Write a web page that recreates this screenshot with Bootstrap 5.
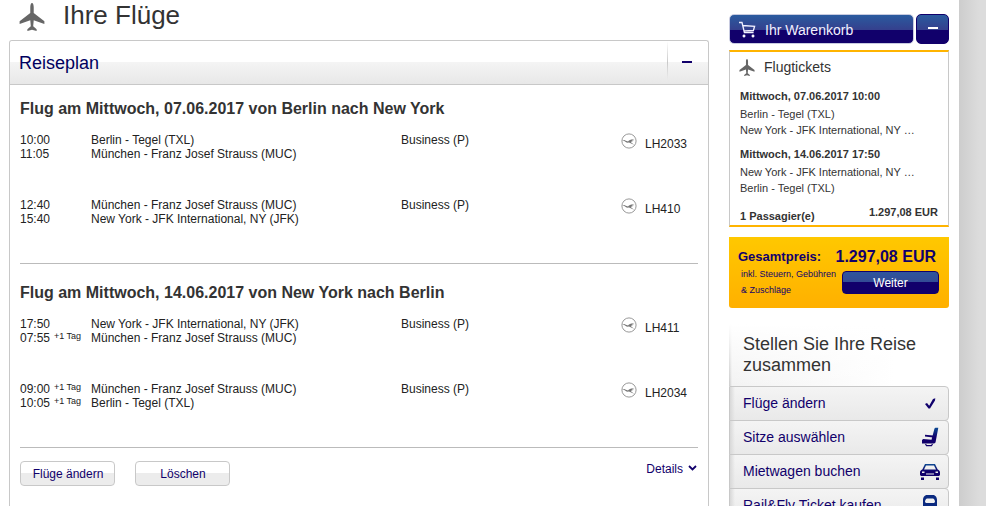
<!DOCTYPE html>
<html lang="de">
<head>
<meta charset="utf-8">
<meta name="viewport" content="width=device-width, initial-scale=1">
<title>Ihre Flüge</title>
<link href="https://cdn.jsdelivr.net/npm/bootstrap@5.3.0/dist/css/bootstrap.min.css" rel="stylesheet">
<style>
:root { --navy: #11006b; --line: #c8c8c8; --gold: #ffb400; --ink: #333; }
body { font-family: "Liberation Sans", Arial, sans-serif; font-size: 12px; line-height: 14px; color: var(--ink); background: #fff; }
a { color: var(--navy); text-decoration: none; }
h1, h2, h3 { margin: 0; color: var(--ink); }
.page-edge { flex: 0 0 27px; background: linear-gradient(90deg, #cdcdcd, #dcdcdc 75%); }
.sheet { padding: 0 10px 0 9px; gap: 20px; }
.page-title { height: 40px; padding: 0 10px; gap: 18px; }
.page-title h1 { font-size: 26px; font-weight: 400; line-height: 30px; }
.page-title svg { margin-top: 3px; }
.plan { border: 1px solid var(--line); border-bottom: 0; border-radius: 3px 3px 0 0; }
.plan-head { height: 44px; padding-left: 9px; border-bottom: 1px solid var(--line); border-radius: 3px 3px 0 0; background: linear-gradient(#fff 50%, #f4f4f4 50%, #e8e8e8); }
.plan-head h2 { font-size: 18px; font-weight: 400; color: #00005f; line-height: 22px; }
.plan-toggle { width: 41px; border: 0; padding: 0 2px 2px 0; background: linear-gradient(#fff0, #c8c8c8 50%, #fff0 90%) left / 1px 100% no-repeat; }
.dash { display: block; width: 10px; height: 2px; margin: 0 auto; background: var(--navy); }
.plan-body { padding: 14px 10px 0; }
.trip { border-bottom: 1px solid #bbb; }
.trip + .trip { padding-top: 19px; }
.trip h3 { font-size: 16px; font-weight: 700; line-height: 20px; margin-bottom: 14px; }
.flights { width: 100%; table-layout: fixed; color: #222; }
.flights td { height: 65px; padding: 0; vertical-align: top; }
.col-time { width: 71px; }
.col-class { width: 220px; }
.col-no { width: 77px; }
.clock { width: 34px; }
.plus-day { font-size: 9px; line-height: 11px; }
.flight-no { gap: 8px; }
.flight-no span { padding-top: 4px; }
.soft-btn { width: 95px; height: 25px; padding: 1px 0 0 1px; border: 1px solid var(--line); border-radius: 4px; font-size: 12px; line-height: 14px; color: var(--navy); background: linear-gradient(#fff 48%, #ececec 48%); }
.plan-foot { padding: 13px 0; }
.plan-foot .btn-pair { gap: 20px; }
.plan-foot a { padding-top: 1px; }
.side { flex: 0 0 220px; font-size: 11px; line-height: 16px; padding-top: 14px; }
.cart-head { gap: 2px; }
.cart-btn { height: 30px; border: 1px solid #c8cbe0; border-radius: 5px; padding: 2px 8px 0; gap: 9px; font-size: 14px; color: #f0f0ff; background: linear-gradient(#2a5b9f, #353f8d 54%, #11006b 54%); }
.cart-min { width: 33px; height: 30px; padding: 0; border: 1px solid var(--navy); border-radius: 5px; background: linear-gradient(#2a5b9f, #353f8d 54%, #11006b 54%); }
.cart-min .dash { background: #fff; margin-bottom: 3px; }
.cart-box { margin-top: 6px; padding: 7px 10px 0; border: solid var(--line); border-width: 0 1px; border-top: 2px solid var(--gold); border-bottom: 2px solid var(--gold); }
.cart-box h2 { font-size: 14px; font-weight: 400; line-height: 16px; }
.cart-kind { gap: 9px; margin: 0 0 12px -1px; }
.leg { margin-bottom: 8px; }
.leg strong { display: block; margin-bottom: 2px; }
.cart-sum { height: 21px; }
.cart-sum .pax { padding-top: 4px; }
.total { margin-top: 10px; padding: 10px 10px 10px 9px; border-radius: 0 0 3px 3px; color: var(--navy); background: linear-gradient(#ffc800, #ffb000); }
.total-row { line-height: 19px; font-size: 13px; padding-right: 3px; }
.total-row .sum { font-size: 16px; }
.fineprint { font-size: 9px; line-height: 16px; padding-left: 3px; white-space: nowrap; }
.go-btn { width: 97px; height: 23px; margin-top: 5px; padding: 0; border: 1px solid var(--navy); border-radius: 4px; font-size: 12px; color: #fff; background: linear-gradient(#2f559d, #334b95 48%, #11006b 48%); }
.build { margin-top: 16px; padding: 10px 14px; background: linear-gradient(#fff, #fff0), linear-gradient(90deg, #c8c8c8, #f3f3f3 3px, #fff 75%); }
.build h2 { font-size: 18px; font-weight: 400; line-height: 21px; }
.menu-item { height: 35px; margin-bottom: -1px; padding: 0 8px 1px 13px; font-size: 14px; border: 1px solid var(--line); border-radius: 0 4px 4px 0; background: linear-gradient(90deg, #d8d8d8, #d8d8d800 5px), linear-gradient(#f4f4f4, #e9e9e9); }
.menu-item:hover { color: var(--navy); }
</style>
<script src="https://cdn.jsdelivr.net/npm/bootstrap@5.3.0/dist/js/bootstrap.bundle.min.js"></script>
</head>
<body>
<svg class="d-none">
  <symbol id="plane" viewBox="0 0 24 26"><path d="M12 0c1 0 1.600 1.800 1.600 4v5.200L23.500 17v2.400L13.600 16l-.5 5.700 3.200 2.600V26L12 24.800 7.700 26v-1.700l3.200-2.600-.5-5.700L.5 19.400V17l9.900-7.800V4C10.400 1.800 11 0 12 0z" fill="#666"/></symbol>
  <symbol id="crane" viewBox="0 0 16 16"><circle cx="8" cy="8" r="7.100" fill="none" stroke="#999" stroke-width="1"/><path d="M1 7c2-.3 3.300.4 4.600 1L7 8.500c1-1.400 3.500-2.300 7-2.800l-3.500 1.500 2.600-.2-2.900 1.200 2 .1-2.500.8 3.300 2.600-5-2.100c-1.600.3-2.700-.1-3.600-.9C3.500 8 2.500 7.400 1 7z" fill="#777"/></symbol>
</svg>
<div class="d-flex vh-100 overflow-hidden">
  <div class="sheet d-flex flex-grow-1">
    <main class="d-flex flex-column flex-grow-1">
      <div class="page-title d-flex align-items-start">
        <svg width="26" height="28"><use href="#plane"/></svg>
        <h1>Ihre Flüge</h1>
      </div>
      <section class="plan flex-grow-1">
        <div class="plan-head d-flex justify-content-between">
          <h2 class="align-self-center">Reiseplan</h2>
          <button type="button" class="plan-toggle" aria-label="Reiseplan einklappen"><span class="dash"></span></button>
        </div>
        <div class="plan-body">
          <section class="trip">
            <h3>Flug am Mittwoch, 07.06.2017 von Berlin nach New York</h3>
            <table class="flights">
              <colgroup><col class="col-time"><col><col class="col-class"><col class="col-no"></colgroup>
              <tbody>
                <tr><td>10:00<br>11:05</td><td>Berlin - Tegel (TXL)<br>München - Franz Josef Strauss (MUC)</td><td>Business (P)</td>
                  <td><div class="flight-no d-flex"><svg width="16" height="16"><use href="#crane"/></svg><span>LH2033</span></div></td></tr>
                <tr><td>12:40<br>15:40</td><td>München - Franz Josef Strauss (MUC)<br>New York - JFK International, NY (JFK)</td><td>Business (P)</td>
                  <td><div class="flight-no d-flex"><svg width="16" height="16"><use href="#crane"/></svg><span>LH410</span></div></td></tr>
              </tbody>
            </table>
          </section>
          <section class="trip">
            <h3>Flug am Mittwoch, 14.06.2017 von New York nach Berlin</h3>
            <table class="flights">
              <colgroup><col class="col-time"><col><col class="col-class"><col class="col-no"></colgroup>
              <tbody>
                <tr><td><div>17:50</div><div class="d-flex"><span class="clock">07:55</span><span class="plus-day">+1 Tag</span></div></td><td>New York - JFK International, NY (JFK)<br>München - Franz Josef Strauss (MUC)</td><td>Business (P)</td>
                  <td><div class="flight-no d-flex"><svg width="16" height="16"><use href="#crane"/></svg><span>LH411</span></div></td></tr>
                <tr><td><div class="d-flex"><span class="clock">09:00</span><span class="plus-day">+1 Tag</span></div><div class="d-flex"><span class="clock">10:05</span><span class="plus-day">+1 Tag</span></div></td><td>München - Franz Josef Strauss (MUC)<br>Berlin - Tegel (TXL)</td><td>Business (P)</td>
                  <td><div class="flight-no d-flex"><svg width="16" height="16"><use href="#crane"/></svg><span>LH2034</span></div></td></tr>
              </tbody>
            </table>
          </section>
          <div class="plan-foot d-flex justify-content-between align-items-start">
            <div class="btn-pair d-flex">
              <button type="button" class="soft-btn">Flüge ändern</button>
              <button type="button" class="soft-btn">Löschen</button>
            </div>
            <a href="#" class="d-flex align-items-center gap-1">Details
              <svg width="11" height="10" viewBox="0 0 11 10"><path d="M2 2l3.500 3.500L9 2" fill="none" stroke="#11006b" stroke-width="1.800"/></svg></a>
          </div>
        </div>
      </section>
    </main>
    <aside class="side">
      <div class="cart-head d-flex">
        <button type="button" class="cart-btn d-flex align-items-center flex-grow-1">
          <svg width="18" height="18" viewBox="0 0 18 18" fill="none" stroke="#f0f0ff" stroke-width="1.300"><path d="M1 1.500h3l2.400 10h9.200M4.600 4.500l12 .8-1.200 4.200-9.500.4"/><circle cx="6" cy="15" r="1.200" fill="#fff" stroke-width=".6"/><circle cx="15" cy="15" r="1.200" fill="#fff" stroke-width=".6"/></svg>
          Ihr Warenkorb</button>
        <button type="button" class="cart-min" aria-label="Warenkorb einklappen"><span class="dash"></span></button>
      </div>
      <section class="cart-box">
        <div class="cart-kind d-flex">
          <svg width="16" height="17"><use href="#plane"/></svg>
          <h2>Flugtickets</h2>
        </div>
        <div class="leg"><strong>Mittwoch, 07.06.2017 10:00</strong>Berlin - Tegel (TXL)<br>New York - JFK International, NY …</div>
        <div class="leg"><strong>Mittwoch, 14.06.2017 17:50</strong>New York - JFK International, NY …<br>Berlin - Tegel (TXL)</div>
        <div class="cart-sum fw-bold d-flex justify-content-between"><span class="pax">1 Passagier(e)</span><span>1.297,08 EUR</span></div>
      </section>
      <section class="total">
        <div class="total-row fw-bold d-flex justify-content-between"><span>Gesamtpreis:</span><span class="sum">1.297,08 EUR</span></div>
        <div class="d-flex justify-content-between align-items-start">
          <div class="fineprint">inkl. Steuern, Gebühren<br>&amp; Zuschläge</div>
          <button type="button" class="go-btn">Weiter</button>
        </div>
      </section>
      <section class="build"><h2>Stellen Sie Ihre Reise zusammen</h2></section>
      <nav>
        <a href="#" class="menu-item d-flex align-items-center justify-content-between">Flüge ändern
          <svg width="20" height="20" viewBox="0 0 20 20"><path d="M5 11l2-1 2.200 2.800L13 6l2.300-.8-.3 2.300L10 15.500H8.500z" fill="#10006c"/></svg></a>
        <a href="#" class="menu-item d-flex align-items-center justify-content-between">Sitze auswählen
          <svg width="20" height="20" viewBox="0 0 20 20"><defs><linearGradient id="tint" x1="0" y1="0" x2="0" y2="1"><stop offset="0" stop-color="#0b4a92"/><stop offset=".6" stop-color="#11006b"/></linearGradient></defs><path d="M14.500 1.500l.8-.7h3L17.500 5l-2 10.500-1.300 1H2V13l1.200-1 8.300.8z" fill="url(#tint)"/><path d="M5 7.800l8 .8v1.800l-8-.8z" fill="#11006b"/><path d="M5.500 17l1 1.600h5l1-1.600" fill="none" stroke="#11006b" stroke-width="1.200"/></svg></a>
        <a href="#" class="menu-item d-flex align-items-center justify-content-between">Mietwagen buchen
          <svg width="20" height="20" viewBox="0 0 20 20"><path d="M5 3h10l2.700 5.500c1.500.5 2.300 1.500 2.300 3V14l-1 1H1l-1-1v-2.500c0-1.500.8-2.500 2.300-3zM6 4.500L4 8.500h12l-2-4z" fill="url(#tint)" fill-rule="evenodd"/><path d="M2 10.500h2.500V12H2zM15.500 10.500H18V12h-2.500zM6 12.500h8v1H6z" fill="#eee"/><path d="M1 16.500h3V19H1zM16 16.500h3V19h-3z" fill="#11006b"/></svg></a>
        <a href="#" class="menu-item d-flex align-items-center justify-content-between">Rail&amp;Fly Ticket kaufen
          <svg width="20" height="20" viewBox="0 0 20 20"><path d="M7 0h6c2.500 0 4 2.500 4 5v10l-3 3H6l-3-3V5c0-2.500 1.500-5 4-5zM7 3.500C5.500 4 5 5.500 5 7l1 1h8l1-1c0-1.500-.5-3-2-3.500z" fill="#0b2a80" fill-rule="evenodd"/></svg></a>
      </nav>
    </aside>
  </div>
  <div class="page-edge"></div>
</div>
</body>
</html>
